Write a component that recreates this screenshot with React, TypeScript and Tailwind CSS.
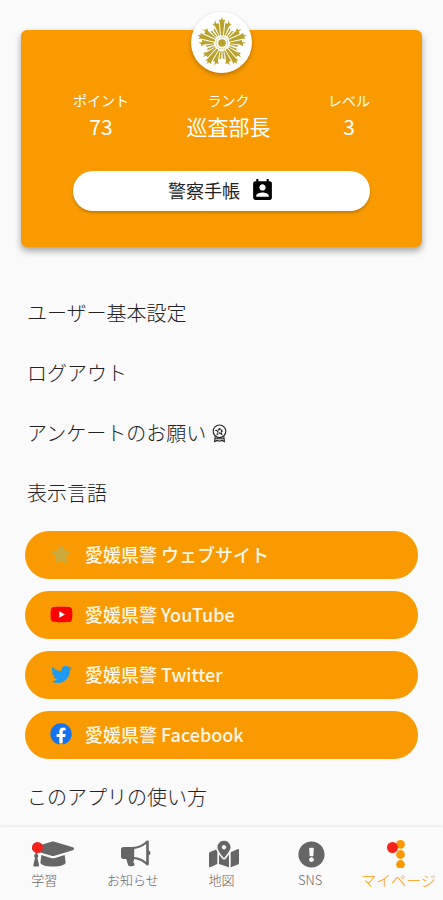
import type { ReactNode } from "react";
import {
  FaExclamationCircle,
  FaFacebook,
  FaGraduationCap,
  FaMapMarkedAlt,
  FaStar,
  FaTwitter,
  FaYoutube,
} from "react-icons/fa";
import { MdPermContactCalendar } from "react-icons/md";

const stats = [
  { label: "ポイント", value: "73" },
  { label: "ランク", value: "巡査部長" },
  { label: "レベル", value: "3" },
];

const links = [
  { label: "愛媛県警 ウェブサイト", icon: <FaStar size={20} className="text-[#cbaa3c]" /> },
  { label: "愛媛県警 YouTube", icon: <YouTubeIcon /> },
  { label: "愛媛県警 Twitter", icon: <FaTwitter size={21} className="text-[#1d9bf0]" /> },
  { label: "愛媛県警 Facebook", icon: <FacebookIcon /> },
];

const tabs = [
  { label: "学習", icon: <FaGraduationCap size={42} />, badge: true },
  { label: "お知らせ", icon: <MegaphoneIcon /> },
  { label: "地図", icon: <FaMapMarkedAlt size={30} /> },
  { label: "SNS", icon: <FaExclamationCircle size={27} /> },
  { label: "マイページ", icon: <DotsIcon />, badge: true, active: true },
];

function YouTubeIcon() {
  return (
    <span className="relative flex">
      <span className="absolute inset-x-2 inset-y-1.5 bg-white" />
      <FaYoutube size={23} className="relative text-[#ff0000]" />
    </span>
  );
}

function FacebookIcon() {
  return (
    <span className="relative flex">
      <span className="absolute inset-x-1 top-1 bottom-0.5 rounded-full bg-white" />
      <FaFacebook size={22} className="relative text-[#1673ee]" />
    </span>
  );
}

function MegaphoneIcon() {
  return (
    <svg width="30" height="28" viewBox="0 0 30 28" fill="currentColor">
      <path d="M2.5 7H12v12h1v1.5c-1.2 1-.6 2 .4 3v1.800c-1.500 1.300-5 1.300-6.200.2L5.300 19H2.500A2.500 2.500 0 0 1 0 16.500v-7A2.500 2.500 0 0 1 2.500 7Z" />
      <path
        fillRule="evenodd"
        d="M11 7C17 7 22 4.500 25.500.800c.8-.6 2.300-.2 2.300.9v9.100a2.300 2.300 0 0 1 0 4.400v9.100c0 1.100-1.500 1.500-2.300.9C22 21.500 17 19 11 19ZM13.200 9v8c4.400.4 8.600 2.200 12 4.900V4.100c-3.400 2.700-7.600 4.500-12 4.900Z"
      />
    </svg>
  );
}

function DotsIcon() {
  return (
    <svg width="24" height="28" viewBox="0 0 24 28" fill="currentColor">
      <circle cx="13.5" cy="4.4" r="4.4" />
      <circle cx="13.5" cy="14.5" r="4.4" />
      <circle cx="13.5" cy="24.5" r="4.4" />
    </svg>
  );
}

function Emblem() {
  const arms = [0, 72, 144, 216, 288];
  return (
    <svg width="52" height="52" viewBox="-26 -26 52 52" fill="#b9a32c">
      {arms.map((angle) => (
        <g key={angle} transform={`rotate(${angle})`}>
          <path d="M-1-7.500-2.300-20.500-3.200-23.500-1-23 0-26 1-23 3.200-23.500 2.300-20.500 1-7.500Z" />
          <path d="M-1.900-7.600-3.200-19.800-5.500-19.300-7-22.800-7.400-19.500-9.600-19-6.800-16.400-2.800-7.400Z" />
          <path d="M1.900-7.600 3.200-19.800 5.500-19.300 7-22.800 7.400-19.500 9.600-19 6.800-16.400 2.800-7.400Z" />
          <path d="M-3.500-7.400-7.500-14.800-8.500-13-4.400-6.800Z" />
          <path d="M3.500-7.400 7.500-14.800 8.500-13 4.400-6.800Z" />
        </g>
      ))}
      <circle r="5.9" fill="none" stroke="#b9a32c" strokeWidth=".8" strokeDasharray="1.2 0.7" />
      <circle r="3.800" />
    </svg>
  );
}

function RosetteIcon() {
  return (
    <svg width="15" height="19" viewBox="0 0 15 19" fill="none" stroke="currentColor" strokeWidth="1.1">
      <circle cx="7.5" cy="7.3" r="6.3" />
      <path
        d="M7.5 4 8.500 6.200 10.800 6.400 9.100 8 9.600 10.200 7.500 9.100 5.400 10.200 5.900 8 4.200 6.400 6.500 6.200Z"
        strokeWidth="1.300"
        strokeDasharray="1.800 0.800"
      />
      <path d="M3.200 12.200 2.600 17.600 5.200 16.400 7.500 17.200 9.800 16.400 12.400 17.600 11.800 12.200M3.200 14.800h8.600" />
    </svg>
  );
}

function MenuRow({ children }: { children: ReactNode }) {
  return (
    <button className="flex h-[60px] w-full items-center gap-1.5 pl-0.5 text-left text-xl font-light text-[#222]">
      {children}
    </button>
  );
}

export default function App() {
  return (
    <div className="flex min-h-screen flex-col bg-[#fafafa] font-['Noto_Sans_CJK_JP',sans-serif]">
      <main className="flex-1">
        <section className="relative mx-[21px] mt-[30px] rounded-md bg-[#f99a00] px-[52px] pt-[58px] pb-9 shadow-[0_4px_7px_rgba(0,0,0,0.35)]">
          <div className="absolute inset-x-0 -top-[18px] flex justify-center">
            <div className="flex size-[61px] items-center justify-center rounded-full bg-white shadow-[0_2px_4px_rgba(0,0,0,0.25)]">
              <Emblem />
            </div>
          </div>
          <dl className="flex justify-between text-center text-white">
            {stats.map((stat) => (
              <div key={stat.label}>
                <dt className="text-sm leading-6">{stat.label}</dt>
                <dd className="text-[21px] leading-[29px]">{stat.value}</dd>
              </div>
            ))}
          </dl>
          <button className="mt-[30px] flex h-10 w-full items-center justify-center gap-2.5 rounded-full bg-white pb-0.5 text-lg text-[#222] shadow-[0_2px_3px_rgba(0,0,0,0.2)]">
            警察手帳
            <MdPermContactCalendar size={25} className="text-black" />
          </button>
        </section>

        <div className="px-[25px] pt-9">
          <MenuRow>ユーザー基本設定</MenuRow>
          <MenuRow>ログアウト</MenuRow>
          <MenuRow>
            アンケートのお願い
            <RosetteIcon />
          </MenuRow>
          <MenuRow>表示言語</MenuRow>
          <div className="flex flex-col gap-3 py-2">
            {links.map((link) => (
              <a
                key={link.label}
                href="#"
                className="flex h-12 items-center gap-3 rounded-full bg-[#f99a00] px-6 pb-0.5 text-lg font-medium text-[#fff6e6]"
              >
                <span className="flex w-6 justify-center">{link.icon}</span>
                {link.label}
              </a>
            ))}
          </div>
          <MenuRow>このアプリの使い方</MenuRow>
        </div>
      </main>

      <nav className="sticky bottom-0 grid h-[73px] grid-cols-5 bg-[#fafafa] shadow-[0_0_3px_rgba(0,0,0,0.15)]">
        {tabs.map((tab) => (
          <a
            key={tab.label}
            href="#"
            className={`flex flex-col items-center pt-[11px] whitespace-nowrap ${
              tab.active ? "text-[15px] text-[#f99a00]" : "text-[13px] text-[#666]"
            }`}
          >
            <span className="relative flex h-8 w-6 items-center">
              <span className="shrink-0">{tab.icon}</span>
              {tab.badge && <span className="absolute top-1 left-0 size-[11px] rounded-full bg-[#f5221b]" />}
            </span>
            <span className="leading-5 font-light">{tab.label}</span>
          </a>
        ))}
      </nav>
    </div>
  );
}
